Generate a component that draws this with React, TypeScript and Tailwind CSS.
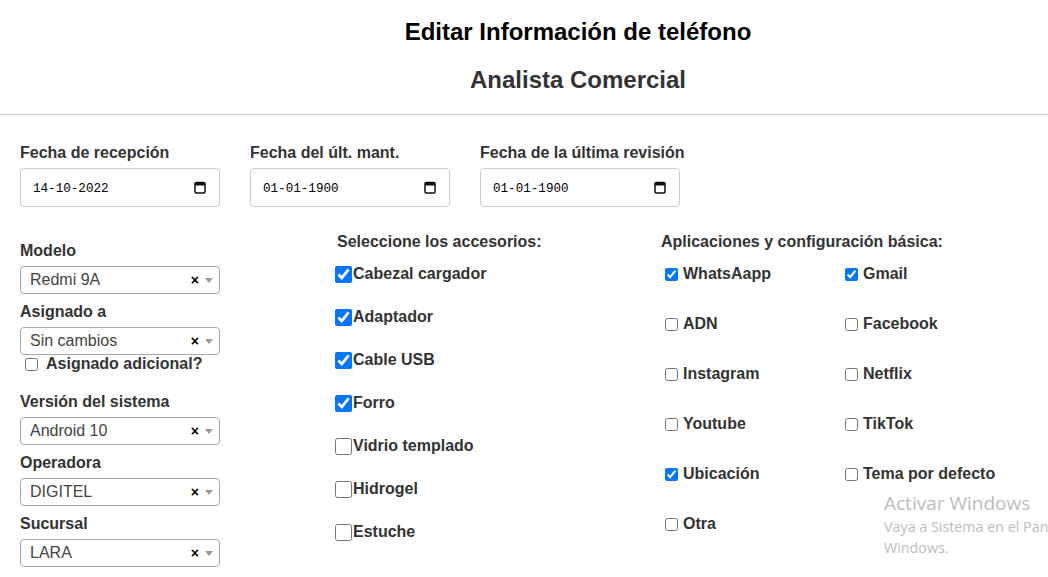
import React from "react";

const selects = [
  { label: "Modelo", value: "Redmi 9A" },
  { label: "Asignado a", value: "Sin cambios" },
];

const selects2 = [
  { label: "Versión del sistema", value: "Android 10" },
  { label: "Operadora", value: "DIGITEL" },
  { label: "Sucursal", value: "LARA" },
];

const accesorios = [
  { name: "Cabezal cargador", checked: true },
  { name: "Adaptador", checked: true },
  { name: "Cable USB", checked: true },
  { name: "Forro", checked: true },
  { name: "Vidrio templado", checked: false },
  { name: "Hidrogel", checked: false },
  { name: "Estuche", checked: false },
];

const apps = [
  { name: "WhatsAapp", checked: true },
  { name: "Gmail", checked: true },
  { name: "ADN", checked: false },
  { name: "Facebook", checked: false },
  { name: "Instagram", checked: false },
  { name: "Netflix", checked: false },
  { name: "Youtube", checked: false },
  { name: "TikTok", checked: false },
  { name: "Ubicación", checked: true },
  { name: "Tema por defecto", checked: false },
  { name: "Otra", checked: false },
];

function CalendarIcon() {
  return (
    <svg width="12" height="13" viewBox="0 0 12 13" className="shrink-0">
      <rect x="1" y="1.5" width="10" height="10.5" rx="1.2" fill="none" stroke="#111" strokeWidth="1.5" />
      <rect x="1" y="1.5" width="10" height="3" fill="#111" />
    </svg>
  );
}

function DateField({ label, value }: { label: string; value: string }) {
  return (
    <div className="w-[200px]">
      <div className="text-[16px] leading-[18px] font-bold text-[#333] whitespace-nowrap">{label}</div>
      <div className="mt-[6px] h-[39px] border border-[#ccc] rounded-[4px] flex items-center justify-between pl-[12px] pr-[13px]">
        <span className="text-[12.6px] text-black translate-y-[2px]" style={{ fontFamily: '"Liberation Mono", monospace' }}>
          {value}
        </span>
        <CalendarIcon />
      </div>
    </div>
  );
}

function SelectField({ label, value }: { label: string; value: string }) {
  return (
    <div className="w-[200px]">
      <div className="text-[16px] leading-[18px] font-bold text-[#333] whitespace-nowrap">{label}</div>
      <div className="mt-[6px] h-[28px] border border-[#aaa] rounded-[4px] flex items-center pl-[9px] pr-[6px]">
        <span className="flex-1 text-[16px] text-[#444]">{value}</span>
        <span className="text-[14px] font-bold text-black leading-none mr-[6px]">×</span>
        <svg width="8" height="5" viewBox="0 0 8 5">
          <path d="M0 0 L8 0 L4 5 Z" fill="#999" />
        </svg>
      </div>
    </div>
  );
}

export default function App() {
  return (
    <div
      className="relative w-[1048px] h-[577px] overflow-hidden bg-white text-[#333]"
      style={{ fontFamily: '"Liberation Sans", Arial, sans-serif' }}
    >
      {/* --- HEADER --- */}
      <div className="flex flex-col items-center pl-[108px] pt-[18px]">
        <h1 className="text-[24px] leading-[28px] font-bold text-black">Editar Información de teléfono</h1>
        <h2 className="mt-[20px] text-[24px] leading-[28px] font-bold text-[#333]">Analista Comercial</h2>
      </div>
      <div className="mt-[20px] border-t border-[#ccc]" />

      {/* --- FECHAS --- */}
      <div className="px-[20px] pt-[29px] flex gap-[30px]">
        <DateField label="Fecha de recepción" value="14-10-2022" />
        <DateField label="Fecha del últ. mant." value="01-01-1900" />
        <DateField label="Fecha de la última revisión" value="01-01-1900" />
      </div>

      <div className="pl-[20px] pt-[35px] flex">
        {/* --- LEFT --- */}
        <div className="w-[315px] flex flex-col">
          <div className="flex flex-col gap-[9px]">
            {selects.map((s) => (
              <SelectField key={s.label} label={s.label} value={s.value} />
            ))}
          </div>
          <label className="flex items-center h-[18px]">
            <input type="checkbox" className="m-0 ml-[5px] w-[13px] h-[13px]" />
            <span className="ml-[8px] text-[16px] font-bold text-[#333]">Asignado adicional?</span>
          </label>
          <div className="mt-[20px] flex flex-col gap-[9px]">
            {selects2.map((s) => (
              <SelectField key={s.label} label={s.label} value={s.value} />
            ))}
          </div>
        </div>

        {/* --- ACCESORIOS --- */}
        <div className="w-[326px] -mt-[9px]">
          <div className="pl-[2px] text-[16px] leading-[18px] font-bold text-[#333]">
            Seleccione los accesorios:
          </div>
          <div className="mt-[14px] flex flex-col gap-[25px]">
            {accesorios.map((a) => (
              <label key={a.name} className="flex items-center h-[18px]">
                <input type="checkbox" defaultChecked={a.checked} className="m-0 w-[17px] h-[17px]" />
                <span className="ml-[1px] text-[16px] font-bold text-[#333]">{a.name}</span>
              </label>
            ))}
          </div>
        </div>

        {/* --- APLICACIONES --- */}
        <div className="flex-1 -mt-[9px]">
          <div className="text-[16px] leading-[18px] font-bold text-[#333]">
            Aplicaciones y configuración básica:
          </div>
          <div className="mt-[14px] grid grid-cols-[180px_1fr] gap-y-[32px]">
            {apps.map((a) => (
              <label key={a.name} className="flex items-center h-[18px]">
                <input type="checkbox" defaultChecked={a.checked} className="m-0 ml-[4px] w-[13px] h-[13px]" />
                <span className="ml-[5px] text-[16px] font-bold text-[#333]">{a.name}</span>
              </label>
            ))}
          </div>
        </div>
      </div>

      {/* --- WATERMARK --- */}
      <div
        className="absolute left-[884px] top-[490px] w-[164px] overflow-hidden text-[#bdbdbd] whitespace-nowrap pointer-events-none"
        style={{ fontFamily: '"Open Sans", "Noto Sans", sans-serif' }}
      >
        <div className="text-[19px] leading-[26px]">Activar Windows</div>
        <div className="text-[14.3px] leading-[21px]">Vaya a Sistema en el Pan</div>
        <div className="text-[14.3px] leading-[21px]">Windows.</div>
      </div>
    </div>
  );
}
